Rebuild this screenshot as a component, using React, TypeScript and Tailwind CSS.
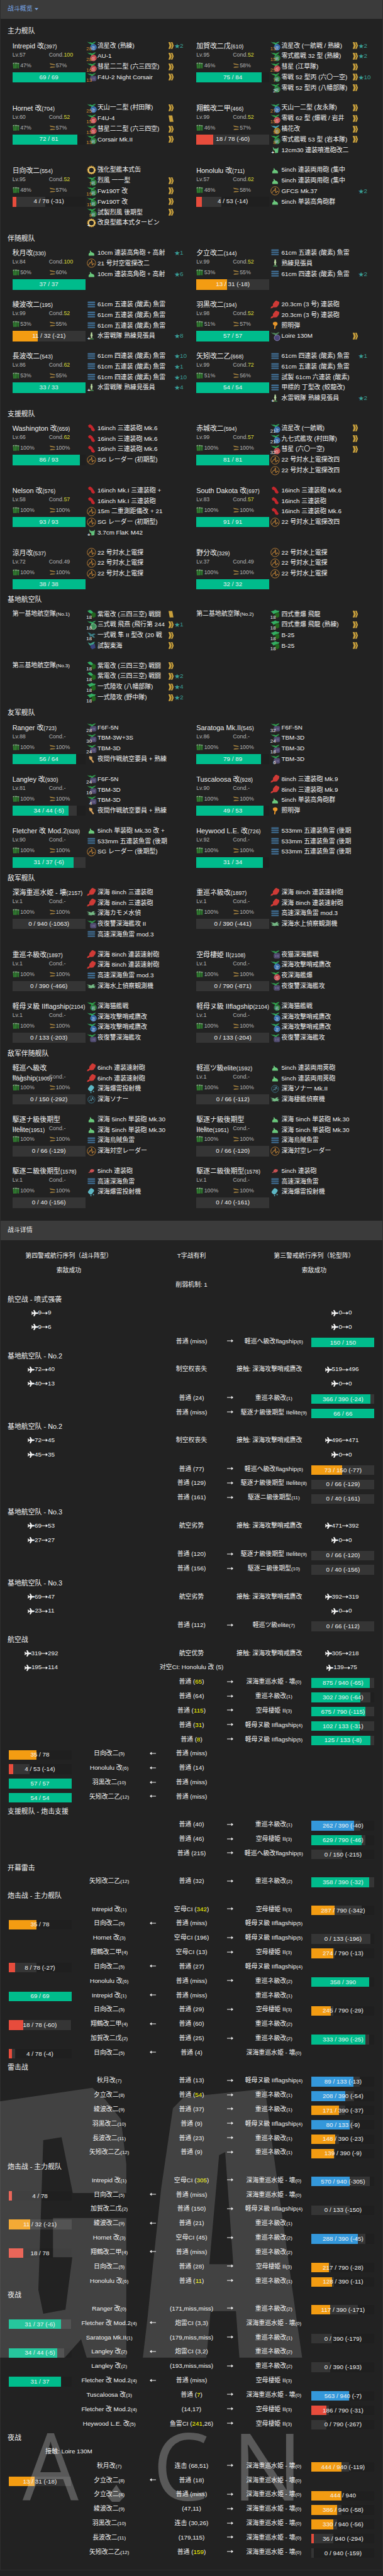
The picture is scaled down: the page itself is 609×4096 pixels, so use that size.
import React from 'react'
import { FaPlane } from 'react-icons/fa'

type Hp = [cur: number, max: number, delta?: number, prev?: number]
// [icon, name, plane count ('w' prefix = full squadron), proficiency, stars, extra slot]
type Equip = [icon: string, name: string, count?: string, prof?: number, star?: number, ex?: boolean]
type Ship = { name: string; id: string; lv?: number; cond?: number; fuel?: number; ammo?: number; hp?: Hp; eq: Equip[] }

const ship = (name: string, id: string, lv: number, cond: number, fuel: number, ammo: number, hp: Hp, eq: Equip[]): Ship => ({
  name, id, lv, cond, fuel, ammo, hp, eq,
})

const fleets: { title: string; ships: Ship[] }[] = [
  {
    title: '主力舰队',
    ships: [
      ship('Intrepid 改', '397', 57, 100, 47, 57, [69, 69], [
        ['blue', '流星改 (熟練)', '28', 1, 2],
        ['red', 'AU-1', '28', 1],
        ['red', '彗星二二型 (六三四空)', '16', 1],
        ['night', 'F4U-2 Night Corsair', '13', 1],
      ]),
      ship('加賀改二戊', '610', 95, 52, 46, 58, [75, 84], [
        ['blue', '流星改 (一航戦 / 熟練)', '13', 1, 2],
        ['green', '零式艦戦 32 型 (熟練)', '15', 1, 2],
        ['red', '彗星 (江草隊)', '29', 1],
        ['green', '零戦 52 型丙 (六〇一空)', '7', 1, 10],
        ['green', '零戦 52 型丙 (八幡部隊)', 'w2', 1],
      ]),
      ship('Hornet 改', '704', 60, 52, 47, 57, [72, 81], [
        ['blue', '天山一二型 (村田隊)', '25', 1],
        ['red', 'F4U-4', '15', 2],
        ['red', '彗星二二型 (六三四空)', '13', 1],
        ['green', 'Corsair Mk.II', '13', 1],
      ]),
      ship('翔鶴改二甲', '466', 99, 52, 46, 57, [18, 78, 60], [
        ['blue', '天山一二型 (友永隊)', '27', 1],
        ['red', '零戦 62 型 (爆戦 / 岩井', '15', 1],
        ['jet', '橘花改', '9', 1],
        ['green', '零式艦戦 53 型 (岩本隊)', '8', 1],
        ['aagun', '12cm30 連装噴進砲改二', undefined, 0, 0, true],
      ]),
      ship('日向改二', '554', 95, 52, 48, 57, [4, 78, 31], [
        ['turbine', '強化型艦本式缶'],
        ['green', '烈風 一一型', '7', 1],
        ['green', 'Fw190T 改', '19', 1],
        ['green', 'Fw190T 改', '11', 1],
        ['green', '試製烈風 後期型', '9', 1],
        ['turbine', '改良型艦本式タービン', undefined, 0, 0, true],
      ]),
      ship('Honolulu 改', '711', 57, 62, 48, 58, [4, 53, 14], [
        ['ha', '5inch 連装両用砲 (集中'],
        ['ha', '5inch 連装両用砲 (集中'],
        ['radar', 'GFCS Mk.37', undefined, 0, 2],
        ['ha', '5inch 単装高角砲群'],
      ]),
    ],
  },
  {
    title: '伴随舰队',
    ships: [
      ship('秋月改', '330', 84, 100, 50, 60, [37, 37], [
        ['ha', '10cm 連装高角砲 + 高射', undefined, 0, 1],
        ['radar', '21 号対空電探改二'],
        ['ha', '10cm 連装高角砲 + 高射', undefined, 0, 6],
      ]),
      ship('夕立改二', '144', 99, 52, 53, 55, [13, 31, 18], [
        ['torpedo', '61cm 五連装 (酸素) 魚雷'],
        ['lookout', '熟練見張員'],
        ['torpedo', '61cm 四連装 (酸素) 魚雷', undefined, 0, 2],
      ]),
      ship('綾波改二', '195', 99, 52, 53, 55, [11, 32, 21], [
        ['torpedo', '61cm 五連装 (酸素) 魚雷'],
        ['torpedo', '61cm 五連装 (酸素) 魚雷'],
        ['torpedo', '61cm 五連装 (酸素) 魚雷'],
        ['lookout', '水雷戦隊 熟練見張員', undefined, 0, 8, true],
      ]),
      ship('羽黒改二', '194', 98, 52, 51, 57, [57, 57], [
        ['medgun', '20.3cm (3 号) 連装砲'],
        ['medgun', '20.3cm (3 号) 連装砲'],
        ['flare', '照明弾'],
        ['nightsea', 'Loire 130M', undefined, 1],
      ]),
      ship('長波改二', '543', 86, 62, 53, 55, [33, 33], [
        ['torpedo', '61cm 四連装 (酸素) 魚雷', undefined, 0, 10],
        ['torpedo', '61cm 五連装 (酸素) 魚雷', undefined, 0, 1],
        ['torpedo', '61cm 四連装 (酸素) 魚雷', undefined, 0, 10],
        ['lookout', '水雷戦隊 熟練見張員', undefined, 0, 4, true],
      ]),
      ship('矢矧改二乙', '668', 99, 72, 51, 56, [54, 54], [
        ['torpedo', '61cm 四連装 (酸素) 魚雷', undefined, 0, 1],
        ['torpedo', '61cm 五連装 (酸素) 魚雷'],
        ['torpedo', '試製 61cm 六連装 (酸素)'],
        ['torpedo', '甲標的 丁型改 (蛟龍改)'],
        ['lookout', '水雷戦隊 熟練見張員', undefined, 0, 2, true],
      ]),
    ],
  },
  {
    title: '支援舰队',
    ships: [
      ship('Washington 改', '659', 66, 62, 100, 100, [86, 93], [
        ['biggun', '16inch 三連装砲 Mk.6'],
        ['biggun', '16inch 三連装砲 Mk.6'],
        ['biggun', '16inch 三連装砲 Mk.6'],
        ['radar', 'SG レーダー (初期型)'],
      ]),
      ship('赤城改二', '594', 99, 57, 100, 100, [81, 81], [
        ['blue', '流星改 (一航戦)', 'w21', 1],
        ['blue', '九七式艦攻 (村田隊)', 'w21', 1],
        ['red', '彗星 (六〇一空)', 'w32', 1],
        ['radar', '22 号対水上電探改四'],
        ['radar', '22 号対水上電探改四'],
      ]),
      ship('Nelson 改', '576', 58, 57, 100, 100, [93, 93], [
        ['biggun', '16inch Mk.I 三連装砲 +'],
        ['biggun', '16inch Mk.I 三連装砲'],
        ['radar', '15m 二重測距儀改 + 21'],
        ['radar', 'SG レーダー (初期型)'],
        ['aagun', '3.7cm FlaK M42', undefined, 0, 0, true],
      ]),
      ship('South Dakota 改', '697', 83, 57, 100, 100, [91, 91], [
        ['biggun', '16inch 三連装砲 Mk.6'],
        ['biggun', '16inch 三連装砲'],
        ['biggun', '16inch 三連装砲 Mk.6'],
        ['radar', '22 号対水上電探改四'],
      ]),
      ship('涼月改', '537', 72, 49, 100, 100, [38, 38], [
        ['radar', '22 号対水上電探'],
        ['radar', '22 号対水上電探'],
        ['radar', '22 号対水上電探'],
      ]),
      ship('野分改', '329', 37, 49, 100, 100, [32, 32], [
        ['radar', '22 号対水上電探'],
        ['radar', '22 号対水上電探'],
        ['radar', '22 号対水上電探'],
      ]),
    ],
  },
  {
    title: '基地航空队',
    ships: [
      {
        name: '第一基地航空隊', id: 'No.1', eq: [
          ['shiden', '紫電改 (三四三空) 戦闘', 'w18', 2],
          ['army', '三式戦 飛燕 (飛行第 244', 'w18', 1, 1],
          ['hayabusa', '一式戦 隼 II 型改 (20 戦', 'w18', 1],
          ['tokai', '試製東海', undefined, 1],
        ],
      },
      {
        name: '第二基地航空隊', id: 'No.2', eq: [
          ['land', '四式重爆 飛龍', 'w18', 1],
          ['land', '四式重爆 飛龍 (熟練)', 'w18', 1],
          ['land', 'B-25', 'w18', 1],
          ['land', 'B-25', 'w18', 1],
        ],
      },
      {
        name: '第三基地航空隊', id: 'No.3', eq: [
          ['shiden', '紫電改 (三四三空) 戦闘', 'w18', 1],
          ['shiden', '紫電改 (三四三空) 戦闘', 'w18', 1, 2],
          ['land', '一式陸攻 (八幡部隊)', 'w18', 1, 4],
          ['land', '一式陸攻 (野中隊)', 'w18', 1, 2],
        ],
      },
    ],
  },
  {
    title: '友军舰队',
    ships: [
      ship('Ranger 改', '723', 88, 0, 100, 100, [56, 64], [
        ['night', 'F6F-5N', 'w28'],
        ['night', 'TBM-3W+3S', 'w30'],
        ['night', 'TBM-3D', 'w24'],
        ['wrench', '夜間作戦航空要員 + 熟練'],
      ]),
      ship('Saratoga Mk.II', '545', 86, 0, 100, 100, [79, 89], [
        ['night', 'F6F-5N', 'w32'],
        ['night', 'TBM-3D', 'w24'],
        ['night', 'TBM-3D', 'w18'],
        ['night', 'TBM-3D', 'w6'],
      ]),
      ship('Langley 改', '930', 81, 0, 100, 100, [34, 44, 5], [
        ['night', 'F6F-5N', 'w24'],
        ['night', 'TBM-3D', 'w16'],
        ['night', 'TBM-3D', 'w4'],
        ['wrench', '夜間作戦航空要員 + 熟練'],
      ]),
      ship('Tuscaloosa 改', '928', 90, 0, 100, 100, [49, 53], [
        ['medgun', '8inch 三連装砲 Mk.9'],
        ['medgun', '8inch 三連装砲 Mk.9'],
        ['ha', '5inch 単装高角砲群'],
        ['flare', '照明弾'],
      ]),
      ship('Fletcher 改 Mod.2', '628', 90, 0, 100, 100, [31, 37, 6], [
        ['ha', '5inch 単装砲 Mk.30 改 +'],
        ['torpedo', '533mm 五連装魚雷 (後期'],
        ['radar', 'SG レーダー (後期型)'],
      ]),
      ship('Heywood L.E. 改', '726', 92, 0, 100, 100, [31, 34], [
        ['torpedo', '533mm 五連装魚雷 (後期'],
        ['torpedo', '533mm 五連装魚雷 (後期'],
        ['torpedo', '533mm 五連装魚雷 (後期'],
      ]),
    ],
  },
  {
    title: '敌军舰队',
    ships: [
      ship('深海重巡水姫 - 壊', '2157', 1, 0, 100, 100, [0, 940, 1063], [
        ['medgun', '深海 8inch 三連装砲'],
        ['medgun', '深海 8inch 三連装砲'],
        ['seaplane', '深海カモメ水偵'],
        ['night', '夜復讐深海艦攻 II'],
        ['torpedo', '高速深海魚雷 mod.3'],
      ]),
      ship('重巡ネ級改', '1897', 1, 0, 100, 100, [0, 390, 441], [
        ['medgun', '深海 8inch 連装速射砲'],
        ['medgun', '深海 8inch 連装速射砲'],
        ['torpedo', '高速深海魚雷 mod.3'],
        ['seaplane', '深海水上偵察観測機'],
      ]),
      ship('重巡ネ級改', '1897', 1, 0, 100, 100, [0, 390, 466], [
        ['medgun', '深海 8inch 連装速射砲'],
        ['medgun', '深海 8inch 連装速射砲'],
        ['torpedo', '高速深海魚雷 mod.3'],
        ['seaplane', '深海水上偵察観測機'],
      ]),
      ship('空母棲姫 II', '2108', 1, 0, 100, 100, [0, 790, 871], [
        ['night', '夜猫深海艦戦'],
        ['blue', '深海攻撃哨戒鷹改'],
        ['red', '夜深海艦爆'],
        ['night', '夜復讐深海艦攻'],
      ]),
      ship('軽母ヌ級 IIflagship', '2104', 1, 0, 100, 100, [0, 133, 203], [
        ['green', '深海猫艦戦'],
        ['blue', '深海攻撃哨戒鷹改'],
        ['blue', '深海攻撃哨戒鷹改'],
        ['night', '夜復讐深海艦攻'],
      ]),
      ship('軽母ヌ級 IIflagship', '2104', 1, 0, 100, 100, [0, 133, 204], [
        ['green', '深海猫艦戦'],
        ['blue', '深海攻撃哨戒鷹改'],
        ['blue', '深海攻撃哨戒鷹改'],
        ['night', '夜復讐深海艦攻'],
      ]),
    ],
  },
  {
    title: '敌军伴随舰队',
    ships: [
      ship('軽巡ヘ級改\nflagship', '1905', 1, 0, 100, 100, [0, 150, 292], [
        ['medgun', '6inch 連装速射砲'],
        ['medgun', '6inch 連装速射砲'],
        ['depth', '深海爆雷投射機'],
        ['sonar', '深海ソナー'],
      ]),
      ship('軽巡ツ級elite', '1592', 1, 0, 100, 100, [0, 66, 112], [
        ['ha', '5inch 連装両用莢砲'],
        ['ha', '5inch 連装両用莢砲'],
        ['sonar', '深海ソナー Mk.II'],
        ['seaplane', '深海棲艦偵察機'],
      ]),
      ship('駆逐ナ級後期型\nIIelite', '1951', 1, 0, 100, 100, [0, 66, 129], [
        ['ha', '深海 5inch 単装砲 Mk.30'],
        ['ha', '深海 5inch 単装砲 Mk.30'],
        ['torpedo', '深海烏賊魚雷'],
        ['radar', '深海対空レーダー'],
      ]),
      ship('駆逐ナ級後期型\nIIelite', '1951', 1, 0, 100, 100, [0, 66, 120], [
        ['ha', '深海 5inch 単装砲 Mk.30'],
        ['ha', '深海 5inch 単装砲 Mk.30'],
        ['torpedo', '深海烏賊魚雷'],
        ['radar', '深海対空レーダー'],
      ]),
      ship('駆逐ニ級後期型', '1578', 1, 0, 100, 100, [0, 40, 156], [
        ['smallgun', '5inch 連装砲'],
        ['torpedo', '高速深海魚雷'],
        ['depth', '深海爆雷投射機'],
      ]),
      ship('駆逐ニ級後期型', '1578', 1, 0, 100, 100, [0, 40, 161], [
        ['smallgun', '5inch 連装砲'],
        ['torpedo', '高速深海魚雷'],
        ['depth', '深海爆雷投射機'],
      ]),
    ],
  },
]

type Row =
  | { kind: 'title'; text: string }
  | { kind: 'thirds'; cells: [string, string, string] }
  | { kind: 'air'; l: [number, number]; mode: string; contact: string; r: [number, number] }
  | { kind: 'atk'; dir: 'l' | 'r'; from: string; atk: string; to: string; hp: Hp }

const title = (text: string): Row => ({ kind: 'title', text })
const thirds = (a: string, b: string, c: string): Row => ({ kind: 'thirds', cells: [a, b, c] })
const air = (l: [number, number], mode: string, contact: string, r: [number, number]): Row => ({ kind: 'air', l, mode, contact, r })
const right = (from: string, atk: string, to: string, hp: Hp): Row => ({ kind: 'atk', dir: 'r', from, atk, to, hp })
const left = (hp: Hp, from: string, atk: string, to: string): Row => ({ kind: 'atk', dir: 'l', from, atk, to, hp })

const HAWK = '接触: 深海攻撃哨戒鷹改'
const HIME = '深海重巡水姫 - 壊|0'
const NE1 = '重巡ネ級改|1'
const NE2 = '重巡ネ級改|2'
const KUBO = '空母棲姫 II|3'
const NU4 = '軽母ヌ級 IIflagship|4'
const NU5 = '軽母ヌ級 IIflagship|5'
const HE6 = '軽巡ヘ級改flagship|6'

const details: Row[] = [
  thirds('第四警戒航行序列（战斗阵型）', 'T字战有利', '第三警戒航行序列（轮型阵）'),
  thirds('索敌成功', '', '索敌成功'),
  thirds('', '削弱机制: 1', ''),
  title('航空战 - 喷式强袭'),
  air([9, 9], '', '', [0, 0]),
  air([9, 6], '', '', [0, 0]),
  right('', '普通 (miss)', HE6, [150, 150]),
  title('基地航空队 - No.2'),
  air([72, 40], '制空权丧失', HAWK, [519, 496]),
  air([40, 13], '', '', [0, 0]),
  right('', '普通 (24)', NE1, [366, 390, 24]),
  right('', '普通 (miss)', '駆逐ナ級後期型 IIelite|9', [66, 66]),
  title('基地航空队 - No.2'),
  air([72, 45], '制空权丧失', HAWK, [496, 471]),
  air([45, 35], '', '', [0, 0]),
  right('', '普通 (77)', HE6, [73, 150, 77]),
  right('', '普通 (129)', '駆逐ナ級後期型 IIelite|8', [0, 66, 129]),
  right('', '普通 (161)', '駆逐ニ級後期型|11', [0, 40, 161]),
  title('基地航空队 - No.3'),
  air([69, 53], '航空劣势', HAWK, [471, 392]),
  air([27, 27], '', '', [0, 0]),
  right('', '普通 (120)', '駆逐ナ級後期型 IIelite|9', [0, 66, 120]),
  right('', '普通 (156)', '駆逐ニ級後期型|10', [0, 40, 156]),
  title('基地航空队 - No.3'),
  air([69, 47], '航空劣势', HAWK, [392, 319]),
  air([23, 11], '', '', [0, 0]),
  right('', '普通 (112)', '軽巡ツ級elite|7', [0, 66, 112]),
  title('航空战'),
  air([319, 292], '航空优势', HAWK, [305, 218]),
  air([195, 114], '对空CI: Honolulu 改 (5)', '', [139, 75]),
  right('', '普通 (*65*)', HIME, [875, 940, 65]),
  right('', '普通 (64)', NE1, [302, 390, 64]),
  right('', '普通 (*115*)', KUBO, [675, 790, 115]),
  right('', '普通 (*31*)', NU4, [102, 133, 31]),
  right('', '普通 (*8*)', NU5, [125, 133, 8]),
  left([35, 78], '日向改二|5', '普通 (miss)', ''),
  left([4, 53, 14], 'Honolulu 改|6', '普通 (14)', ''),
  left([57, 57], '羽黒改二|10', '普通 (miss)', ''),
  left([54, 54], '矢矧改二乙|12', '普通 (miss)', ''),
  title('支援舰队 - 炮击支援'),
  right('', '普通 (40)', NE1, [262, 390, 40]),
  right('', '普通 (46)', KUBO, [629, 790, 46]),
  right('', '普通 (215)', HE6, [0, 150, 215, 73]),
  title('开幕雷击'),
  right('矢矧改二乙|12', '普通 (32)', NE2, [358, 390, 32]),
  title('炮击战 - 主力舰队'),
  right('Intrepid 改|1', '空母CI (*342*)', KUBO, [287, 790, 342]),
  left([35, 78], '日向改二|5', '普通 (miss)', NU5),
  right('Hornet 改|3', '空母CI (196)', NU5, [0, 133, 196, 125]),
  right('翔鶴改二甲|4', '空母CI (13)', KUBO, [274, 790, 13]),
  left([8, 78, 27], '日向改二|5', '普通 (27)', NU4),
  right('Honolulu 改|6', '普通 (miss)', NE2, [358, 390]),
  left([69, 69], 'Intrepid 改|1', '普通 (miss)', NE1),
  right('日向改二|5', '普通 (29)', KUBO, [245, 790, 29]),
  left([18, 78, 60], '翔鶴改二甲|4', '普通 (60)', NE2),
  right('加賀改二戊|2', '普通 (25)', NE2, [333, 390, 25]),
  left([4, 78, 4], '日向改二|5', '普通 (4)', HIME),
  title('雷击战'),
  right('秋月改|7', '普通 (13)', NU4, [89, 133, 13]),
  right('夕立改二|8', '普通 (*54*)', NE1, [208, 390, 54]),
  right('綾波改二|9', '普通 (37)', NE1, [171, 390, 37]),
  right('羽黒改二|10', '普通 (9)', NU4, [80, 133, 9]),
  right('長波改二|11', '普通 (23)', NE1, [148, 390, 23]),
  right('矢矧改二乙|12', '普通 (9)', NE1, [139, 390, 9]),
  title('炮击战 - 主力舰队'),
  right('Intrepid 改|1', '空母CI (*305*)', HIME, [570, 940, 305]),
  left([4, 78], '日向改二|5', '普通 (miss)', HIME),
  right('加賀改二戊|2', '普通 (150)', NU4, [0, 133, 150, 80]),
  left([11, 32, 21], '綾波改二|9', '普通 (21)', NE1),
  right('Hornet 改|3', '空母CI (45)', NE2, [288, 390, 45]),
  left([18, 78], '翔鶴改二甲|4', '普通 (miss)', NE2),
  right('日向改二|5', '普通 (28)', KUBO, [217, 790, 28]),
  right('Honolulu 改|6', '普通 (*11*)', NE1, [128, 390, 11]),
  title('夜战'),
  right('Ranger 改|0', '(171,miss,miss)', NE2, [117, 390, 171]),
  left([31, 37, 6], 'Fletcher 改 Mod.2|4', '炮雷CI (3,3)', HIME),
  right('Saratoga Mk.II|1', '(179,miss,miss)', NE1, [0, 390, 179, 128]),
  left([34, 44, 5], 'Langley 改|2', '炮雷CI (3,2)', NE2),
  right('Langley 改|2', '(193,miss,miss)', NE2, [0, 390, 193, 117]),
  left([31, 37], 'Fletcher 改 Mod.2|4', '普通 (miss)', KUBO),
  right('Tuscaloosa 改|3', '普通 (*7*)', HIME, [563, 940, 7]),
  right('Fletcher 改 Mod.2|4', '(14,17)', KUBO, [186, 790, 31]),
  right('Heywood L.E. 改|5', '鱼雷CI (*241*,26)', KUBO, [0, 790, 267, 186]),
  title('夜战'),
  thirds('接触: Loire 130M', '', ''),
  right('秋月改|7', '连击 (68,51)', HIME, [444, 940, 119]),
  left([13, 31, 18], '夕立改二|8', '普通 (18)', HIME),
  right('夕立改二|8', '普通 (miss)', HIME, [444, 940]),
  right('綾波改二|9', '(47,11)', HIME, [386, 940, 58]),
  right('羽黒改二|10', '连击 (30,26)', HIME, [330, 940, 56]),
  right('長波改二|11', '(179,115)', HIME, [36, 940, 294]),
  right('矢矧改二乙|12', '普通 (*159*)', HIME, [0, 940, 159, 36]),
]

const jp = "font-['Liberation_Sans','Noto_Sans_CJK_JP',sans-serif]"

function HpBar({ hp, className }: { hp: Hp; className: string }) {
  const [cur, max, delta, prev] = hp
  const now = (cur / max) * 100
  const before = (Math.min(max, prev ?? cur + (delta ?? 0)) / max) * 100
  const color = now <= 25 ? 'bg-[#e74c3c]' : now <= 50 ? 'bg-[#f39c12]' : now <= 75 ? 'bg-[#3498db]' : 'bg-[#00bc8c]'
  return (
    <div className={`relative flex bg-[#1f1f1f] ${className}`}>
      <div className={color} style={{ width: `${now}%` }} />
      <div className="bg-[#353535]" style={{ width: `${before - now}%` }} />
      <span className="absolute inset-0 flex items-center justify-center text-[9.9px] whitespace-nowrap">
        {cur} / {max}
        {delta ? ` (-${delta})` : ''}
      </span>
    </div>
  )
}

const badge: Record<string, { plane: string; fill: string; ring: string; mark: string }> = {
  blue: { plane: '#2fa35c', fill: '#2c5f9e', ring: '#4a87cc', mark: '攻' },
  red: { plane: '#2fa34c', fill: '#b33c40', ring: '#d9636a', mark: '爆' },
  green: { plane: '#2fa34c', fill: '#1f6b30', ring: '#3a9a4c', mark: '戦' },
  night: { plane: '#2f9a4c', fill: '#4a4468', ring: '#5f5a85', mark: '' },
  jet: { plane: '#46a5b8', fill: '#8a6a14', ring: '#c99a24', mark: '噴' },
  nightsea: { plane: '#4f8a5c', fill: '#4a4478', ring: '#8781b0', mark: '' },
  army: { plane: '#2fa35c', fill: '#3f8f5c', ring: '#8fd0a0', mark: '' },
}

function EquipIcon({ icon }: { icon: string }) {
  const b = badge[icon]
  if (b) {
    return (
      <svg viewBox="0 0 17 17" className="size-[17px]">
        <path d="M1.5 2.2l3 1.3 2.6-.3 2.4 1 2.4-1.2 3.4-1-1.2 2.1-3 1.6-.6 2.3-2.2.2-.6-2.3-3-.8z" fill={b.plane} />
        {icon === 'night' ? (
          <rect x="6.8" y="7" width="9" height="7.6" rx="1.8" fill={b.fill} stroke={b.ring} strokeWidth=".8" />
        ) : (
          <circle cx="11.6" cy="11.2" r="4.6" fill={b.fill} stroke={b.ring} strokeWidth="1" />
        )}
        {icon === 'night' && <path d="M9.3 9v4M11.6 9.2v3.4M13.4 9v4" stroke="#8f8ab0" strokeWidth=".7" />}
        {b.mark && (
          <text x="11.6" y="13.5" fontSize="6" textAnchor="middle" fill={b.ring === '#d9636a' ? '#f5b0b0' : '#bcd6e6'}>
            {b.mark}
          </text>
        )}
      </svg>
    )
  }
  return (
    <svg viewBox="0 0 17 17" className="size-[17px]">
      {icon === 'ha' && (
        <path d="M4 13.4c-.6-2 .3-4.200 2.200-5L5.800 6.200 7 5.200l1.200 2.600c1 .2 1.500.9 2.200.9 2 .2 2.800 2 2.600 4.700z" fill="#6ac87c" />
      )}
      {icon === 'medgun' && (
        <path d="M1 14.200l1.600-3 2.200-.7.300-3.500L8.500 2.700 10.300 1.800l4.900 2.400-.5 3.600-3.200 4.400-3.200.6-2.500-.2-2 1.400z" fill="#cf3a36" />
      )}
      {icon === 'smallgun' && <path d="M3.400 11.800l2.200-1.700.8-2.800 2.600-1.500 4 1.200-.8 3-3 1.600-2.800-.4-2 1z" fill="#c75052" />}
      {icon === 'biggun' && <path d="M3 4.800l3-2.300 3.600 2.200 4.600 7.200-2.200 2.200-3.200-1.300-1.800-4.200-2.700-.9z" fill="#c4262c" />}
      {icon === 'torpedo' && (
        <g fill="#3f6b8f">
          <rect x="2.400" y="3.600" width="11.800" height="2.300" rx=".6" />
          <rect x="2.400" y="7" width="11.800" height="2.300" rx=".6" />
          <rect x="2.400" y="10.400" width="11.800" height="2.300" rx=".6" />
        </g>
      )}
      {icon === 'radar' && (
        <g fill="none" stroke="#b47a34" strokeWidth="1">
          <circle cx="8.400" cy="8.400" r="6.700" />
          <path d="M3.600 11.800L6.200 7.400l1.200 1.200 1.400-4.800 1 8 2.200-3 1.800 1.600" stroke="#d08c38" />
        </g>
      )}
      {icon === 'sonar' && (
        <g fill="none" stroke="#3b7288" strokeWidth="1">
          <circle cx="8.400" cy="8.400" r="5.600" />
          <path d="M5 11l2-2.600 1.400 2 1.600-5.600 1.800 4.400M6 6.600l1.600-1.400" stroke="#5a9ab0" />
        </g>
      )}
      {icon === 'lookout' && (
        <g>
          <path d="M7.500 2.400h2.200v2.400l.8 2.600-.8 1.200.2 2.800H7.400l.1-2.600-.9-1.600.9-2.200z" fill="#b9d9a0" />
          <path d="M5.200 13.800l.8-1.800h5.400l.8 1.800z" fill="#3f7d48" />
        </g>
      )}
      {icon === 'flare' && (
        <path d="M5 4.200C7 2 11 2.200 12.200 4.600c.6 2.400-.6 4.200-2.800 4.600L8.600 14H6.800l.6-5.600C5.400 8 4.600 6 5 4.200z" fill="#e8962a" />
      )}
      {icon === 'turbine' && (
        <g fill="none">
          <circle cx="8.400" cy="8.400" r="6" stroke="#e2a536" strokeWidth="1.800" strokeDasharray="1.800 .9" />
          <circle cx="8.400" cy="8.400" r="4.700" stroke="#f4cf70" strokeWidth="1.900" />
        </g>
      )}
      {icon === 'aagun' && (
        <path d="M4.600 3.600l3.200 3.200 1.400-.6 2 .2 2.700-2.200-.9 8.800-4.600.6-.5-3.800-2.200-1.500z" fill="#62c07c" />
      )}
      {icon === 'wrench' && (
        <path d="M4.400 4.800L6.200 2.400l.6 1.700 1.600.2.600-1 1 3.100-.6 1.800 3.200 4.200-1.600 1.800L7.600 9.400l-2-.8z" fill="#d3a05c" />
      )}
      {icon === 'depth' && (
        <g fill="#5db7c4">
          <rect x="4" y="2.600" width="7.400" height="9.600" rx="2.800" transform="rotate(38 7.800 7.400)" />
          <circle cx="7.600" cy="14.200" r=".9" />
          <circle cx="11.600" cy="12.600" r="1" />
        </g>
      )}
      {icon === 'seaplane' && (
        <path d="M.8 5.400l4.600.7 2.800 1 2-1.800 3.600-.5-2 2.300 4 .9-3 1 2 2.200-4.600-.5-2 .7-5.700-.7 2.900-1.600L1.600 8.200l3.200-.5z" fill="#74b884" />
      )}
      {icon === 'tokai' && (
        <g>
          <path d="M2.600 3.200l4 2 5-2.400 2.200-.4-1.600 3.600-4.800 3.200-2.400-2z" fill="#3f9f8a" />
          <path d="M7.400 7.400l6.400-1.600 1 6.400-5.200 2.400-2.800-3z" fill="#39437c" />
        </g>
      )}
      {icon === 'hayabusa' && (
        <path d="M2 3.400l4.400 1.400L8 6.600l4.600-1.400 2.400 1.200-4 2 3 2.800-1.600 1-4-2.700-2.200 1-1.600-4z" fill="#3d7d84" />
      )}
      {(icon === 'land' || icon === 'shiden') && (
        <g>
          <path
            d={icon === 'land' ? 'M1.600 4.200l5-1.400 2-1.400 2.600 1.400 4.200.4-2.200 3-4.600.8-2.600 1.800-1.600-2.400z' : 'M2 3.600l4-1.800 3 1.400 3.200 4-3.800.8-3.200-1.600z'}
            fill="#34ad62"
          />
          <path d="M8.600 7.200l3.800-2 2.800 2.400-.2 5-3.600 1.800-3-2.400z" fill="#22661f" />
        </g>
      )}
    </svg>
  )
}

function Proficiency({ level }: { level?: number }) {
  return (
    <svg viewBox="0 0 10 13" className="h-[13px] w-[10px] shrink-0">
      {level === 1 && <path d="M.8 1h3.100l2 5.500-2 5.300H.8l1.800-5.300zM4.800 1h2.400l2 5.500-2 5.300H4.800l2-5.300z" fill="#c9a03c" />}
      {level === 2 && <path d="M1 1.400h6l1.800 10.400H2.800z" fill="#c9a03c" />}
    </svg>
  )
}

function EquipRow({ eq }: { eq: Equip }) {
  const [icon, name, count, prof, star, ex] = eq
  const full = count?.startsWith('w')
  return (
    <div className="flex h-[16.8px] items-center">
      <div className="relative w-[18px] shrink-0">
        <EquipIcon icon={icon} />
        {count && (
          <span
            className={`absolute right-[9px] bottom-[-1px] text-[7.8px] leading-[9px] ${full ? 'text-[#f0f0f0]' : 'text-[#dc9030]'}`}
          >
            {full ? count.slice(1) : count}
          </span>
        )}
        {ex && <span className="absolute bottom-0 left-[2px] text-[8px] leading-[8px] font-bold">+</span>}
      </div>
      <span className="w-[112.500px] shrink-0 text-[9.9px] leading-[16px] whitespace-nowrap">{name}</span>
      <Proficiency level={prof} />
      {star ? (
        <span className="text-[9.9px] leading-[16px] text-[#3a9f97]">
          <span className="text-[8.500px]">★</span>
          {star}
        </span>
      ) : null}
    </div>
  )
}

function FuelIcon() {
  return (
    <svg viewBox="0 0 11 11" className="h-[11px] w-[11px]">
      <path d="M.4 1.200L3 .6l.8 8.800-2.800.6zM3.800.8h3v9h-3zM7.400.9l3 .5-.2 8.400-2.600-.4z" fill="#2f7a2f" />
      <path d="M.6 1.200L3 .6v1.500l-2.400.4zM4 .8h2.800v1.400H4zM7.400.9l3 .5v1.300l-3-.5z" fill="#93a893" />
    </svg>
  )
}

function AmmoIcon() {
  return (
    <svg viewBox="0 0 11 11" className="h-[11px] w-[11px]">
      <path d="M.8 1.600l7.600 1.500 2 1.200-2.400.3L2 3.400zM1 8.200l2.400-1.400 7 .3-2 1.200-5.800.4z" fill="#a5823f" />
    </svg>
  )
}

function ShipCard({ s }: { s: Ship }) {
  const yellow = s.cond && s.cond > 49
  return (
    <div className={`flex min-h-[67.2px] w-1/2 pl-[7.7px] ${jp}`}>
      <div className="w-[116px] shrink-0">
        {s.hp ? (
          <>
            <h5 className="h-[16.8px] pt-[.6px] text-[10.9px] leading-[16px] whitespace-pre">
              {s.name}
              <span className="text-[8.800px]">({s.id})</span>
            </h5>
            <div className="flex h-[13px] items-center text-[8.900px] leading-[13px] text-[#b4b4b4]">
              <span className="w-1/2">Lv.{s.lv}</span>
              <span>
                Cond.<span className={yellow ? 'text-[#d9d935]' : ''}>{s.cond || '-'}</span>
              </span>
            </div>
            <div className="flex h-[20.8px] items-center text-[8.800px] text-[#b4b4b4]">
              <span className="flex w-1/2 items-center gap-[1.500px]">
                <FuelIcon />
                {s.fuel}%
              </span>
              <span className="flex items-center">
                <AmmoIcon />
                {s.ammo}%
              </span>
            </div>
            <HpBar hp={s.hp} className="h-[16.500px] w-[116px]" />
          </>
        ) : (
          <div className="text-[9.9px] leading-[16px] whitespace-nowrap">
            {s.name}
            <span className="text-[7.9px]">({s.id})</span>
          </div>
        )}
      </div>
      <div className="pl-[1.300px]">
        {s.eq.map((e, i) => (
          <EquipRow key={i} eq={e} />
        ))}
      </div>
    </div>
  )
}

function Arrow({ dir, className }: { dir: 'l' | 'r'; className?: string }) {
  return (
    <svg viewBox="0 0 10 6" className={`h-[6px] w-[10px] ${dir === 'l' ? 'rotate-180' : ''} ${className ?? ''}`}>
      <path d="M0 2.400h6.800V.6L10 3 6.800 5.400V3.600H0z" fill="currentColor" />
    </svg>
  )
}

function Planes({ n }: { n: [number, number] }) {
  return (
    <span className="inline-flex items-center">
      <FaPlane className="h-[10px] w-[11px]" />
      {n[0]}
      <Arrow dir="r" />
      {n[1]}
    </span>
  )
}

function Named({ text }: { text: string }) {
  if (!text) return null
  const [name, idx] = text.split('|')
  return (
    <>
      {name}
      <span className="text-[7.9px]">({idx})</span>
    </>
  )
}

function DetailRow({ row }: { row: Row }) {
  if (row.kind === 'title') {
    return <h4 className="h-[21.560px] text-[10.9px] leading-[22.800px]">{row.text}</h4>
  }
  if (row.kind === 'thirds') {
    return (
      <div className="grid h-[22.830px] grid-cols-3 text-center leading-[22.800px] whitespace-nowrap">
        {row.cells.map((c, i) => (
          <span key={i}>{c}</span>
        ))}
      </div>
    )
  }
  if (row.kind === 'air') {
    return (
      <div className="grid h-[22.830px] grid-cols-[107px_1fr_1fr_1fr_107px] text-center leading-[22.800px] whitespace-nowrap">
        <Planes2 n={row.l} />
        <span />
        <span className="flex justify-center">{row.mode}</span>
        <span className={jp}>{row.contact}</span>
        <Planes2 n={row.r} />
      </div>
    )
  }
  const isLeft = row.dir === 'l'
  return (
    <div className="grid h-[22.830px] grid-cols-[103px_117.300px_21.700px_1fr_21.700px_117.300px_103px] text-center leading-[22.800px] whitespace-nowrap">
      <div className="pt-[5.200px] pl-[1.500px]">{isLeft && <HpBar hp={row.hp} className="h-[15.300px] w-[100px] leading-none" />}</div>
      <span className={jp}><Named text={row.from} /></span>
      <span className="flex justify-center pt-[7.500px]">{isLeft && <Arrow dir="l" />}</span>
      <span>
        {row.atk.split('*').map((part, i) => (
          <span key={i} className={i % 2 ? 'text-[#ffff00]' : ''}>{part}</span>
        ))}
      </span>
      <span className="flex justify-center pt-[7.500px]">{!isLeft && <Arrow dir="r" />}</span>
      <span className={`flex justify-center ${jp}`}><span><Named text={row.to} /></span></span>
      <div className="pt-[5.200px] pl-[1.400px]">{!isLeft && <HpBar hp={row.hp} className="h-[15.300px] w-[100px] leading-none" />}</div>
    </div>
  )
}

function Planes2({ n }: { n: [number, number] }) {
  return (
    <span className="flex items-center justify-center">
      <Planes n={n} />
    </span>
  )
}

// Translucent site mark laid over the lower part of the log
function Watermark() {
  return (
    <svg viewBox="0 0 609 837" className="pointer-events-none absolute bottom-0 left-0 h-[837px] w-[609px]">
      <g transform="translate(0 4.500) scale(.38839 .31715)" fill="#fff" fillOpacity=".15" fillRule="evenodd">
        <path d="M0 245L378 177 430 235 495 335 517 560V705H298L252 425 177 440 165 900 157 1190 177 1310 268 1290 296 1027H217V830H517V1530H355L332 1438 265 1530H0z" />
        <path d="M708 280L752 225 1085 183 1110 420 1212 1320 1237 1530H980L966 1297H862L845 1530H585L605 1320 625 1080 660 680zM897 515L922 500 955 1062H857z" />
      </g>
      <g fill="#fff" fillOpacity=".25" className="font-['Open_Sans',sans-serif]" fontSize="148">
        <text x="36" y="717" textLength="89" lengthAdjust="spacingAndGlyphs">A</text>
        <text x="243" y="717" textLength="90" lengthAdjust="spacingAndGlyphs">C</text>
        <text x="369" y="717" textLength="112" lengthAdjust="spacingAndGlyphs">N</text>
        <path d="M185 692l12.500 19-7.500 8h-12l-7-8z" />
      </g>
    </svg>
  )
}

function pairs(ships: Ship[]) {
  const out: Ship[][] = []
  for (let i = 0; i < ships.length; i += 2) out.push(ships.slice(i, i + 2))
  return out
}

export default function App() {
  return (
    <div className="relative h-[4096px] w-[609px] overflow-hidden bg-[#222] font-['Liberation_Sans','Noto_Sans_CJK_SC',sans-serif] text-[9.9px] text-[#f2f2f2]">
      {/* Battle overview */}
      <section className="h-[1941px] border-x border-[#2d2d2d]">
        <header className="flex h-[30.400px] items-center bg-[#3b3b3b] pb-[2px] pl-[11px] text-[9.9px] text-[#78a5e6]">
          战斗概览
          <svg viewBox="0 0 7 5" className="ml-[3px] h-[5px] w-[6px]">
            <path d="M0 .5h7L3.500 4.500z" fill="currentColor" />
          </svg>
        </header>
        <div className="px-[11px] pt-[3px]">
          {fleets.map((f) => (
            <div key={f.title}>
              <h4 className="h-[30.800px] text-[10.9px] leading-[33px]">{f.title}</h4>
              <div className="flex flex-col gap-[14.900px]">
                {pairs(f.ships).map((p, i) => (
                  <div key={i} className="flex">
                    {p.map((s, j) => (
                      <ShipCard key={j} s={s} />
                    ))}
                  </div>
                ))}
              </div>
            </div>
          ))}
        </div>
      </section>

      {/* Battle details */}
      <section className="h-[2146px] border-x border-b border-[#2d2d2d]">
        <header className="flex h-[31.400px] items-center bg-[#3b3b3b] pb-[1px] pl-[11px] text-[9.9px]">战斗详情</header>
        <div className="px-[11px] pt-[13.700px]">
          {details.map((row, i) => (
            <DetailRow key={i} row={row} />
          ))}
        </div>
      </section>

      <Watermark />
    </div>
  )
}
